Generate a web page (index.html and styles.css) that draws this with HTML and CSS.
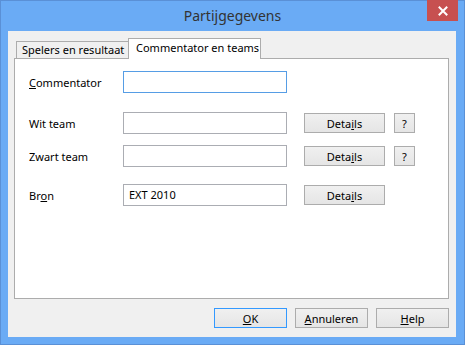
FILE: index.html
```html
<!DOCTYPE html>
<html>
<head>
<meta charset="utf-8">
<link rel="stylesheet" href="styles.css">
</head>
<body>
<div class="window">
  <div class="titlebar">
    <div class="title">Partijgegevens</div>
    <div class="close">
      <svg width="10" height="10" viewBox="0 0 10 10"><path d="M1.5 1.5 L8.5 8.5 M8.5 1.5 L1.5 8.5" stroke="#fff" stroke-width="2" stroke-linecap="square"/></svg>
    </div>
  </div>
  <div class="client">
    <div class="tabs">
      <div class="tab">Spelers en resultaat</div>
      <div class="tab active">Commentator en teams</div>
    </div>
    <div class="panel">
      <div class="row r1">
        <label class="lbl"><u>C</u>ommentator</label>
        <div class="input focus"></div>
      </div>
      <div class="row r2">
        <label class="lbl">Wit team</label>
        <div class="input"></div>
        <button class="btn details">Deta<u>i</u>ls</button>
        <button class="btn q">?</button>
      </div>
      <div class="row r3">
        <label class="lbl">Zwart team</label>
        <div class="input"></div>
        <button class="btn details">Deta<u>i</u>ls</button>
        <button class="btn q">?</button>
      </div>
      <div class="row r4">
        <label class="lbl">Br<u>o</u>n</label>
        <div class="input">EXT 2010</div>
        <button class="btn details">Deta<u>i</u>ls</button>
      </div>
    </div>
    <div class="footer">
      <button class="btn dlg default"><u>O</u>K</button>
      <button class="btn dlg"><u>A</u>nnuleren</button>
      <button class="btn dlg"><u>H</u>elp</button>
    </div>
  </div>
</div>
</body>
</html>
```
FILE: styles.css
```css
* { box-sizing: border-box; }
html, body { margin: 0; padding: 0; }
body {
  width: 465px; height: 345px; overflow: hidden;
  font-family: "Noto Sans", "Segoe UI", sans-serif;
  font-size: 11px; color: #000;
}
.window {
  width: 465px; height: 345px;
  background: #6aabf5;
  border: 1px solid #5a90d6;
  display: flex; flex-direction: column;
}
.titlebar {
  height: 30px;
  display: flex; justify-content: center; align-items: flex-start;
  position: relative;
}
.title {
  font-size: 14px; color: #333; line-height: 30px;
}
.close {
  position: absolute; right: 6px; top: -1px;
  width: 31px; height: 21px;
  background: #c75050;
  display: flex; align-items: center; justify-content: center;
}
.client {
  margin: 0 8px 7px 7px;
  flex: 1;
  background: #f0f0f0;
  display: flex; flex-direction: column;
  padding: 7px 7px 0 6px;
}
.tabs {
  display: flex; align-items: flex-end;
  height: 20px; padding-left: 2px;
  position: relative; z-index: 1;
}
.tab {
  width: 113px;
  height: 17px;
  border: 1px solid #acacac; border-bottom: none;
  background: #f0f0f0;
  padding: 0 0 0 5px;
  line-height: 16px;
  white-space: nowrap;
}
.tab.active {
  width: 133px;
  height: 21px; margin-bottom: -1px; margin-left: -1px;
  background: #fff;
  padding: 0 0 0 7px;
  line-height: 18px;
}
.panel {
  height: 241px;
  background: #fff;
  border: 1px solid #acacac;
  padding: 12px 0 0 14px;
}
.row {
  display: flex; align-items: center;
  height: 22px;
}
.r2 { margin-top: 19px; }
.r3 { margin-top: 11px; }
.r4 { margin-top: 17px; }
.lbl { width: 94px; white-space: nowrap; }
.input {
  width: 164px; height: 22px;
  border: 1px solid #abadb3;
  background: #fff;
  padding: 0 0 0 5px;
  line-height: 19px;
}
.input.focus { border-color: #569de5; }
.btn {
  font: inherit; color: #000;
  height: 20px;
  border: 1px solid #acacac;
  background: linear-gradient(#f0f0f0, #e5e5e5);
  padding: 0; margin: 0;
  line-height: 17px;
}
.details { width: 81px; margin-left: 17px; }
.q { width: 21px; margin-left: 9px; }
.footer {
  display: flex; justify-content: flex-end;
  padding-top: 9px; gap: 8px;
}
.dlg { width: 73px; height: 20px; }
.dlg.default { border-color: #3399ff; }
u { text-decoration: underline; text-underline-offset: 1px; }
```
